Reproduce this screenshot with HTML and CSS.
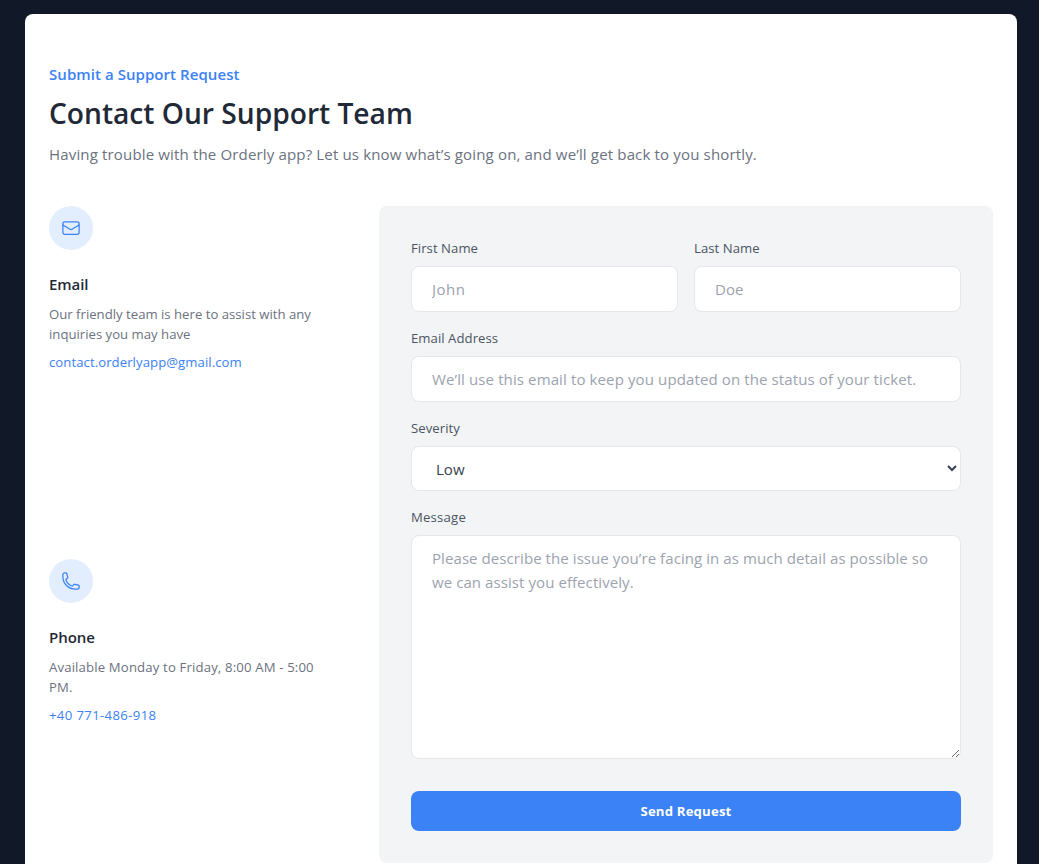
FILE: index.html
```html
<!DOCTYPE html>
<html lang="en">
<head>
<meta charset="utf-8">
<title>Contact Our Support Team</title>
<link rel="stylesheet" href="styles.css">
</head>
<body>
<section class="contact">
  <p class="eyebrow">Submit a Support Request</p>
  <h1 class="title">Contact Our Support Team</h1>
  <p class="intro">Having trouble with the Orderly app? Let us know what’s going on, and we’ll get back to you shortly.</p>

  <div class="layout">
    <div class="channels">
      <div class="channel">
        <span class="badge">
          <svg class="icon" viewBox="0 0 24 24"><path d="M21.75 6.75v10.5a2.25 2.25 0 01-2.25 2.25h-15a2.25 2.25 0 01-2.25-2.25V6.75m19.5 0A2.25 2.25 0 0019.5 4.5h-15a2.25 2.25 0 00-2.25 2.25m19.5 0v.243a2.25 2.25 0 01-1.07 1.916l-7.5 4.615a2.25 2.25 0 01-2.36 0L3.32 8.91a2.25 2.25 0 01-1.07-1.916V6.75"/></svg>
        </span>
        <h2 class="name">Email</h2>
        <p class="about">Our friendly team is here to assist with any inquiries you may have</p>
        <p class="link">contact.orderlyapp@gmail.com</p>
      </div>
      <div class="channel">
        <span class="badge">
          <svg class="icon" viewBox="0 0 24 24"><path d="M2.25 6.75c0 8.284 6.716 15 15 15h2.25a2.25 2.25 0 002.25-2.25v-1.372c0-.516-.351-.966-.852-1.091l-4.423-1.106c-.44-.11-.902.055-1.173.417l-.97 1.293c-.282.376-.769.542-1.21.38a12.035 12.035 0 01-7.143-7.143c-.162-.441.004-.928.38-1.21l1.293-.97c.363-.271.527-.734.417-1.173L6.963 3.102a1.125 1.125 0 00-1.091-.852H4.5A2.25 2.25 0 002.25 4.5v2.25z"/></svg>
        </span>
        <h2 class="name">Phone</h2>
        <p class="about hours">Available Monday to Friday, 8:00 AM - 5:00 PM.</p>
        <p class="link phone">+40 771-486-918</p>
      </div>
    </div>

    <form class="form">
      <div class="row">
        <div class="field">
          <label class="label" for="first">First Name</label>
          <input class="control short" id="first" type="text" placeholder="John">
        </div>
        <div class="field">
          <label class="label" for="last">Last Name</label>
          <input class="control" id="last" type="text" placeholder="Doe">
        </div>
      </div>
      <div class="field">
        <label class="label" for="email">Email Address</label>
        <input class="control email" id="email" type="email" placeholder="We’ll use this email to keep you updated on the status of your ticket.">
      </div>
      <div class="field">
        <label class="label" for="severity">Severity</label>
        <select class="control select" id="severity"><option>Low</option><option>Medium</option><option>High</option></select>
      </div>
      <div class="field">
        <label class="label message-label" for="message">Message</label>
        <textarea class="control message" id="message" placeholder="Please describe the issue you’re facing in as much detail as possible so we can assist you effectively."></textarea>
      </div>
      <button class="send" type="button">Send Request</button>
    </form>
  </div>
</section>
</body>
</html>
```
FILE: styles.css
```css
* { box-sizing: border-box; margin: 0; }

html { height: 100%; }

body {
  height: 100%;
  padding: 14px 22px 0 25px;
  background: #111827;
  font-family: "Segoe UI", "Open Sans", sans-serif;
  font-size: 15.04px;
  line-height: 24px;
}

.contact {
  height: 100%;
  padding: 48px 24px 0;
  border-radius: 8px 8px 0 0;
  background: #fff;
}

.eyebrow { color: #3b82f6; font-weight: 600; letter-spacing: 0.05px; }

.title {
  margin-top: 8px;
  padding-top: 1px;
  height: 36px;
  color: #1f2937;
  font-size: 28.2px;
  font-weight: 600;
  line-height: 36px;
  letter-spacing: -0.02px;
}

.intro { margin-top: 12px; color: #6b7280; letter-spacing: 0.145px; }

.layout {
  display: grid;
  grid-template-columns: minmax(0, 1fr) 614px;
  gap: 48px;
  margin-top: 40px;
}

.channels { display: grid; grid-template-rows: 1fr 1fr; gap: 48px; }

.badge {
  display: flex;
  width: 44px;
  height: 44px;
  padding: 12px;
  border-radius: 50%;
  background: #e2eefe;
}

.icon {
  width: 20px;
  height: 20px;
  fill: none;
  stroke: #3b82f6;
  stroke-width: 1.5;
  stroke-linecap: round;
  stroke-linejoin: round;
}

.name {
  margin-top: 22px;
  color: #1f2937;
  font-size: 15.04px;
  font-weight: 600;
  letter-spacing: -0.08px;
}

.about, .link { margin-top: 8px; font-size: 13.16px; line-height: 20px; }
.about { color: #6b7280; }
.hours { letter-spacing: 0.15px; }
.link { color: #3b82f6; letter-spacing: 0.06px; }
.phone { letter-spacing: 0.35px; }

.form {
  display: grid;
  gap: 16px;
  padding: 32px;
  border-radius: 8px;
  background: #f3f4f6;
}

.row { display: grid; grid-template-columns: 1fr 1fr; gap: 16px; }

.field { display: grid; gap: 8px; }

.label {
  color: #4b5563;
  font-size: 13.16px;
  line-height: 20px;
  letter-spacing: 0.04px;
}
.message-label { letter-spacing: 0.2px; }

.control {
  display: block;
  width: 100%;
  height: 46px;
  padding: 10px 20px;
  border: 1px solid #e5e7eb;
  border-radius: 8px;
  background: #fff;
  color: #374151;
  font: inherit;
}
.control::placeholder { color: #9ca3af; opacity: 1; }
.short { letter-spacing: 0.5px; }
.email { letter-spacing: 0.105px; }

.select { height: 45px; }

.message { height: 224px; resize: vertical; letter-spacing: 0.062px; }

.send {
  height: 40px;
  margin-top: 16px;
  border: 0;
  border-radius: 8px;
  background: #3b82f6;
  color: #fff;
  font: 700 13.16px/20px "Segoe UI", "Open Sans", sans-serif;
  letter-spacing: 0.18px;
}
```
